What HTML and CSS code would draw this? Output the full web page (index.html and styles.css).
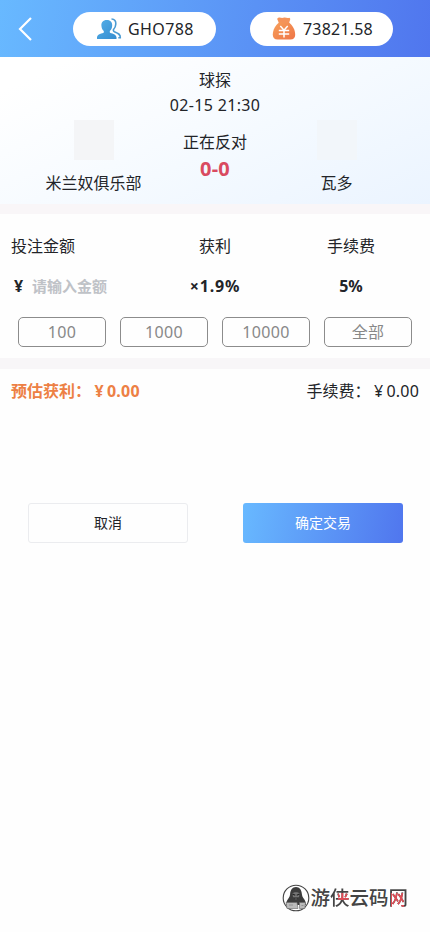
FILE: index.html
```html
<!DOCTYPE html>
<html lang="zh-CN">
<head>
<meta charset="utf-8">
<meta name="viewport" content="width=device-width, initial-scale=1">
<title>球探</title>
<link rel="stylesheet" href="styles.css">
</head>
<body>
<div class="page">
  <header class="topbar">
    <svg class="back" viewBox="0 0 16 26"><path d="M13 2 2 13 13 24" fill="none" stroke="#fff" stroke-width="2.200"/></svg>
    <div class="pill pill-user">
      <svg class="icon-user" viewBox="0 0 26 22">
        <defs><linearGradient id="u" x1="0" y1="0" x2="1" y2="1"><stop offset="0" stop-color="#55afe8"/><stop offset="1" stop-color="#358dd0"/></linearGradient></defs>
        <path d="M10.800 2C6.900 2 5.200 4.600 5.400 7.600c.1 2.400.9 4.200 2.400 5.400v1.400C6.500 15.500 1.200 15.700 1 19.300V21h19.500v-1.700c-.3-3.600-5.400-3.800-6.700-4.900V13c1.500-1.200 2.300-3 2.400-5.400C16.400 4.600 14.700 2 10.800 2Z" fill="url(#u)"/>
        <path d="M15.500 1c3.200.1 4.500 2.300 4.300 5-.1 2-.8 3.800-2.100 5.200-.7.800-.3 2 .7 2.500 3.200 1.300 6.200 2.300 5.900 6h-2" fill="none" stroke="#4b9bd2" stroke-width="1.600"/>
      </svg>
      <span class="user-id">GHO788</span>
    </div>
    <div class="pill pill-money">
      <svg class="icon-bag" viewBox="0 0 24 23">
        <defs><linearGradient id="b" x1="0" y1="0" x2="1" y2="1"><stop offset="0" stop-color="#f7a05b"/><stop offset="1" stop-color="#ee7446"/></linearGradient></defs>
        <path d="M6.300.8c1.900-.9 3.200.6 5 0 2.200-.8 3.700.6 5.800-.1 1 .2 1.400 1.200 1 2.100L16.700 7H7.300L5.400 2.600C5 1.800 5.500 1.100 6.300.8Z" fill="#f4935a"/>
        <path d="M7 5.500h10c3.800 3 6.200 7.400 6.200 12.200 0 3.200-1.700 4.800-4.700 4.800h-13C2.500 22.500.8 20.900.8 17.700.8 12.900 3.200 8.500 7 5.500Z" fill="url(#b)"/>
        <path d="m8.300 9 3.700 4.200L15.700 9M12 13v7.500M6.800 13.500h10.400M6.800 17h10.400" fill="none" stroke="#fff" stroke-width="1.500"/>
      </svg>
      <span class="balance">73821.58</span>
    </div>
  </header>

  <section class="match">
    <div class="team">
      <div class="crest"></div>
      <div class="name">米兰奴俱乐部</div>
    </div>
    <div class="info">
      <div class="league">球探</div>
      <div class="time">02-15 21:30</div>
      <div class="status">正在反对</div>
      <div class="score">0-0</div>
    </div>
    <div class="team">
      <div class="crest crest-faint"></div>
      <div class="name">瓦多</div>
    </div>
  </section>

  <section class="bet">
    <div class="cols labels">
      <div class="first">投注金额</div><div>获利</div><div class="last">手续费</div>
    </div>
    <div class="cols values">
      <div class="first amount"><span class="yen">¥</span><span class="hint">请输入金额</span></div><div class="odds">×1.9%</div><div class="last">5%</div>
    </div>
    <div class="quick">
      <div class="chip">100</div><div class="chip">1000</div><div class="chip">10000</div><div class="chip">全部</div>
    </div>
  </section>

  <section class="summary">
    <div class="profit">预估获利：<span class="sign">¥</span><span class="sum">0.00</span></div>
    <div class="fee">手续费：<span class="sign">¥</span><span class="sum">0.00</span></div>
  </section>

  <div class="actions">
    <div class="btn cancel">取消</div>
    <div class="btn confirm">确定交易</div>
  </div>

  <footer class="brand">
    <svg class="brand-logo" viewBox="0 0 28 28">
      <circle cx="14" cy="14" r="12.800" fill="#fff" stroke="#444" stroke-width="1.100"/>
      <path d="M14 3c-3.700 0-5.700 3.200-5.900 7.200-.1 3-2.400 4.300-3.600 7.500L4 21h20l-.6-3.500c-1-3-3.400-4.300-3.500-7.300C19.700 6.200 17.700 3 14 3Z" fill="#3c3c3c"/>
      <path d="M10.400 9.300c1.400-1.500 5.800-1.500 7.200 0l-.5 3.300-3.100 3.200-3.100-3.200Z" fill="#777"/>
      <path d="m10.500 10 2.800 1.200M17.500 10l-2.800 1.200M12 14h4" stroke="#222" stroke-width="1.200"/>
      <path d="M4 18.500h11l1 6H5ZM17.500 18.500h6l-.7 6h-5.300Z" fill="#bbb" stroke="#666" stroke-width=".6"/>
      <path d="M7 21h4M19.500 21.500h2" stroke="#888" stroke-width=".8"/>
    </svg>
    <div class="brand-name">游<span class="xia">侠</span>云码<span class="wang">网</span></div>
  </footer>
</div>
</body>
</html>
```
FILE: styles.css
```css
* { box-sizing: border-box; }
body {
  margin: 0;
  background: #fefefe;
  color: #222428;
  font: 16px/24px "Noto Sans", "Noto Sans CJK SC", sans-serif;
}
.page {
  width: 430px;
  height: 932px;
  display: flex;
  flex-direction: column;
  overflow: hidden;
}
.topbar {
  height: 57px;
  flex: none;
  display: flex;
  align-items: center;
  padding-left: 18px;
  background: linear-gradient(100deg, #68b9ff, #5076ee);
}
.back { width: 16px; height: 26px; }
.pill {
  width: 143px;
  height: 34px;
  border-radius: 17px;
  background: #fff;
  display: flex;
  align-items: center;
  white-space: nowrap;
}
.pill-user { margin-left: 39px; padding-left: 23px; }
.pill-money { margin-left: 34px; padding-left: 22px; }
.icon-user { width: 26px; height: 22px; margin-right: 6px; }
.icon-bag { width: 24px; height: 23px; margin-right: 7px; }
.user-id { letter-spacing: .4px; }
.balance { letter-spacing: .2px; }
.match {
  height: 157px;
  flex: none;
  display: grid;
  grid-template-columns: 187px 56px 187px;
  background: linear-gradient(155deg, #fff 10%, #f5faff 55%, #ebf4ff);
  border-bottom: 10px solid #f9f6f8;
  text-align: center;
}
.team {
  display: flex;
  flex-direction: column;
  align-items: center;
  padding-top: 63px;
}
.crest { width: 40px; height: 40px; background: #f4f5f7; }
.crest-faint { background: #f2f6fa; }
.name { margin-top: 11px; }
.info { display: flex; flex-direction: column; align-items: center; padding-top: 11px; white-space: nowrap; }
.time { margin-top: 1px; letter-spacing: .35px; }
.status { margin-top: 13px; }
.score { margin-top: 3px; color: #d94a60; font-size: 20px; font-weight: 700; letter-spacing: .3px; }
.bet {
  height: 155px;
  flex: none;
  padding-top: 20px;
  border-bottom: 11px solid #f8f6f8;
}
.cols { display: grid; grid-template-columns: 143px 144px 143px; text-align: center; }
.cols .first { text-align: left; padding-left: 11px; }
.cols .last { padding-right: 15px; }
.values { margin-top: 16px; font-weight: 700; }
.odds { letter-spacing: .8px; }
.amount { display: flex; align-items: center; }
.yen { width: 18px; margin-left: 3px; }
.hint { color: #bfc2c7; font-size: 15px; line-height: 22px; padding-bottom: 1px; }
.quick { display: flex; justify-content: space-between; padding: 0 18px; margin-top: 19px; }
.chip {
  width: 88px;
  height: 30px;
  line-height: 28px;
  border: 1px solid #8c8c8c;
  border-radius: 5px;
  color: #888;
  text-align: center;
  letter-spacing: .3px;
}
.summary { display: flex; justify-content: space-between; padding: 10px 11px 0; height: 134px; flex: none; }
.sign { display: inline-block; width: 16px; text-align: center; }
.sum { letter-spacing: .2px; }
.profit { color: #ed8044; font-weight: 700; }
.actions { display: flex; justify-content: space-between; padding: 0 27px 0 28px; }
.btn {
  width: 160px;
  height: 40px;
  line-height: 40px;
  border-radius: 3px;
  text-align: center;
  font-size: 14px;
}
.cancel { border: 1px solid #ebecef; line-height: 38px; }
.confirm { color: #fff; background: linear-gradient(100deg, #68b9ff, #5076ee); }
.brand { margin: auto 22px 20px auto; display: flex; align-items: center; }
.brand-logo { width: 28px; height: 28px; }
.brand-name { font-size: 19.500px; font-weight: 500; line-height: 28px; color: #444; white-space: nowrap; }
.xia, .wang { color: transparent; -webkit-background-clip: text; background-clip: text; }
.xia { background-image: linear-gradient(#e34b55, #e34b55), linear-gradient(#444, #444); background-size: 12px 7px, auto; background-position: 8px 9px, 0 0; background-repeat: no-repeat; }
.wang { background-image: linear-gradient(#e34b55, #e34b55), linear-gradient(#444, #444); background-size: 13px 14px, auto; background-position: 3px 9px, 0 0; background-repeat: no-repeat; }
```
